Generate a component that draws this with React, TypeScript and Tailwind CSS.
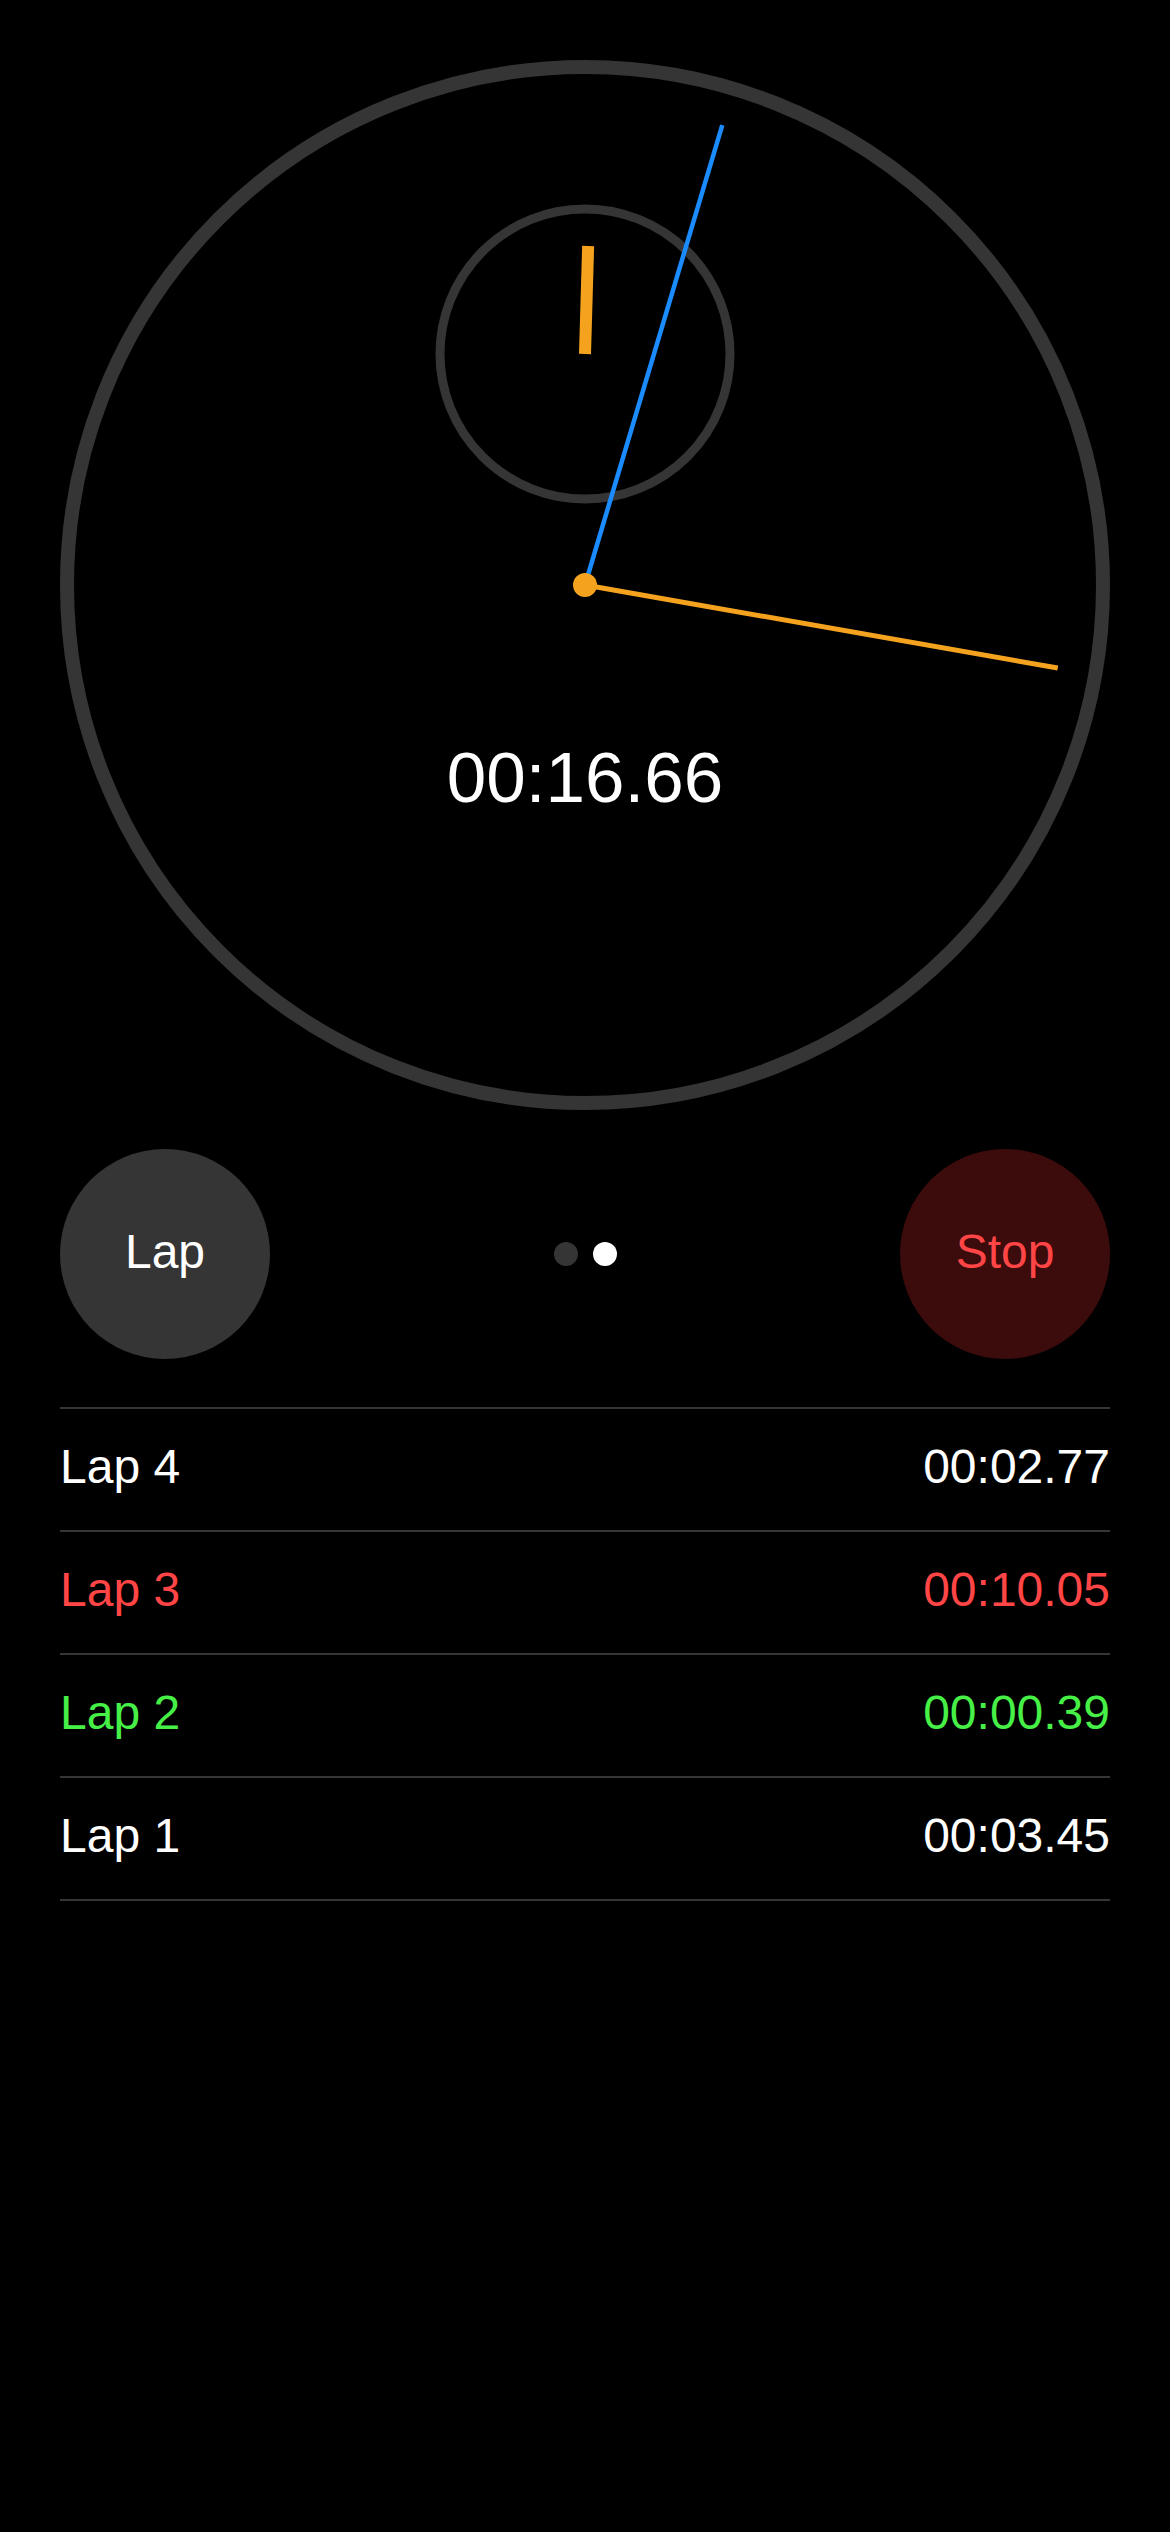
const laps = [
  { label: "Lap 4", time: "00:02.77", color: "text-white" },
  { label: "Lap 3", time: "00:10.05", color: "text-[#ff4545]" },
  { label: "Lap 2", time: "00:00.39", color: "text-[#47f047]" },
  { label: "Lap 1", time: "00:03.45", color: "text-white" },
];

function Dial() {
  // seconds hand: 16.66s, lap hand: 2.77s, minute hand on sub dial
  const sec = 16.66 * 6;
  const lap = 2.77 * 6;
  const min = (16.66 / 60) * 6;
  return (
    <svg width="1050" height="1050" viewBox="0 0 1050 1050">
      <circle cx="525" cy="525" r="518" fill="none" stroke="#353535" strokeWidth="14" />
      <circle cx="525" cy="294" r="145" fill="none" stroke="#353535" strokeWidth="9" />
      <line
        x1="525"
        y1="294"
        x2="525"
        y2="186"
        stroke="#f5a31f"
        strokeWidth="12"
        transform={`rotate(${min} 525 294)`}
      />
      <line
        x1="525"
        y1="525"
        x2="525"
        y2="45"
        stroke="#1a8cff"
        strokeWidth="4.5"
        transform={`rotate(${lap} 525 525)`}
      />
      <line
        x1="525"
        y1="525"
        x2="525"
        y2="45"
        stroke="#f5a31f"
        strokeWidth="5"
        transform={`rotate(${sec} 525 525)`}
      />
      <circle cx="525" cy="525" r="12" fill="#f5a31f" />
    </svg>
  );
}

export default function App() {
  return (
    <main
      className="flex min-h-[2532px] w-[1170px] flex-col bg-black"
      style={{ fontFamily: '"Liberation Sans", Arial, sans-serif' }}
    >
      <div className="relative mx-[60px] mt-[60px] h-[1050px] w-[1050px]">
        <Dial />
        <div className="absolute left-0 right-0 top-[682px] text-center text-[71px] leading-[71px] text-white">
          00:16.66
        </div>
      </div>

      <div className="mt-[39px] flex h-[210px] items-center justify-between px-[60px]">
        <button className="flex h-[210px] w-[210px] items-center justify-center rounded-full bg-[#353535] pb-[4px] text-[48px] text-white">
          Lap
        </button>
        <div className="flex items-center gap-[15px]">
          <span className="h-[24px] w-[24px] rounded-full bg-[#353535]" />
          <span className="h-[24px] w-[24px] rounded-full bg-white" />
        </div>
        <button className="flex h-[210px] w-[210px] items-center justify-center rounded-full bg-[#3c0b0b] pb-[4px] text-[48px] text-[#ff4545]">
          Stop
        </button>
      </div>

      <div className="mx-[60px] mt-[48px] border-b-2 border-[#363636]">
        {laps.map((l) => (
          <div
            key={l.label}
            className={`flex h-[123px] items-center justify-between border-t-2 border-[#363636] pb-[6px] text-[48px] ${l.color}`}
          >
            <span>{l.label}</span>
            <span>{l.time}</span>
          </div>
        ))}
      </div>
    </main>
  );
}
